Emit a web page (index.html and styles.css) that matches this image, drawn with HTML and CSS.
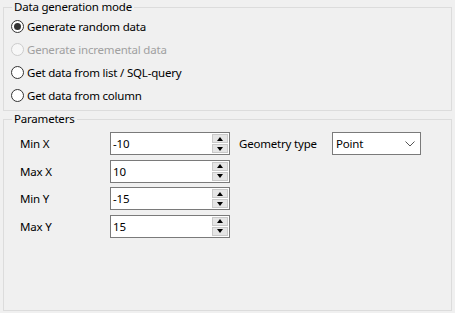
FILE: index.html
```html
<!DOCTYPE html>
<html lang="en">
<head>
  <meta charset="UTF-8">
  <title>Data generation</title>
  <link rel="stylesheet" href="styles.css">
</head>
<body>

  <fieldset class="group mode">
    <legend>Data generation mode</legend>
    <label class="radio checked"><span class="dot"></span>Generate random data</label>
    <label class="radio disabled"><span class="dot"></span>Generate incremental data</label>
    <label class="radio"><span class="dot"></span>Get data from list / SQL-query</label>
    <label class="radio"><span class="dot"></span>Get data from column</label>
  </fieldset>

  <fieldset class="group params">
    <legend>Parameters</legend>
    <div class="cols">
      <div class="fields">
        <div class="row"><span class="lbl">Min X</span><div class="spin"><span class="val">-10</span><div class="btns"><b class="up"></b><b class="down"></b></div></div></div>
        <div class="row"><span class="lbl">Max X</span><div class="spin"><span class="val">10</span><div class="btns"><b class="up"></b><b class="down"></b></div></div></div>
        <div class="row"><span class="lbl">Min Y</span><div class="spin"><span class="val">-15</span><div class="btns"><b class="up"></b><b class="down"></b></div></div></div>
        <div class="row"><span class="lbl">Max Y</span><div class="spin"><span class="val">15</span><div class="btns"><b class="up"></b><b class="down"></b></div></div></div>
      </div>
      <div class="row geo">
        <span class="lbl">Geometry type</span>
        <div class="combo">
          <span class="val">Point</span>
          <svg width="10" height="6" viewBox="0 0 10 6"><path d="M0.5 0.5 L5 5 L9.5 0.5" fill="none" stroke="#555" stroke-width="1"/></svg>
        </div>
      </div>
    </div>
  </fieldset>

</body>
</html>
```

FILE: styles.css
```css
* { box-sizing: border-box; }
body {
  margin: 0; padding: 0 3px 0 3px; background: #f0f0f0; color: #000;
  font-family: 'Noto Sans', sans-serif; font-size: 11.5px; letter-spacing: -0.2px;
  width: 455px; height: 313px;
}
.group {
  margin: 0; border: 1px solid #dcdcdc; min-width: 0; width: 449px;
}
.group legend { padding: 0 2px; line-height: 14px; }
.mode { padding: 1px 0 2px 7px; height: 111px; }
.mode legend { margin-left: 1px; }
.params { margin-top: 1px; padding: 6px 0 0 16px; height: 199px; }
.params legend { margin-left: -8px; }

.radio { display: flex; align-items: center; height: 23px; gap: 3px; }
.dot {
  width: 13px; height: 13px; border: 1px solid #333; border-radius: 50%;
  background: #fff; display: flex; align-items: center; justify-content: center;
}
.checked .dot::after {
  content: ''; width: 7px; height: 7px; border-radius: 50%; background: #333;
}
.disabled { color: #a0a0a0; }
.disabled .dot { border-color: #ccc; background: #f7f7f7; }

.cols { display: flex; }
.fields { display: flex; flex-direction: column; gap: 4.5px; }
.row { display: flex; align-items: center; height: 23px; }
.lbl { width: 90px; }
.spin {
  width: 120px; height: 23px; border: 1px solid #7a7a7a; background: #fff;
  display: flex; align-items: center; justify-content: space-between; padding: 0 0 0 2px;
}
.btns { display: flex; flex-direction: column; gap: 1px; margin-right: 1px; }
.btns b {
  width: 16px; height: 9px; background: #e5e5e5; border: 1px solid #c9c9c9;
  display: flex; align-items: center; justify-content: center;
}
.btns b::after {
  content: ''; border-left: 3.5px solid transparent; border-right: 3.5px solid transparent;
}
.up::after { border-bottom: 4px solid #000; }
.down::after { border-top: 4px solid #000; }

.geo { margin-left: 9px; }
.geo .lbl { width: 93px; }
.combo {
  width: 89px; height: 23px; border: 1px solid #7a7a7a; background: #fff;
  display: flex; align-items: center; justify-content: space-between; padding: 0 5px 0 3px;
}
```
